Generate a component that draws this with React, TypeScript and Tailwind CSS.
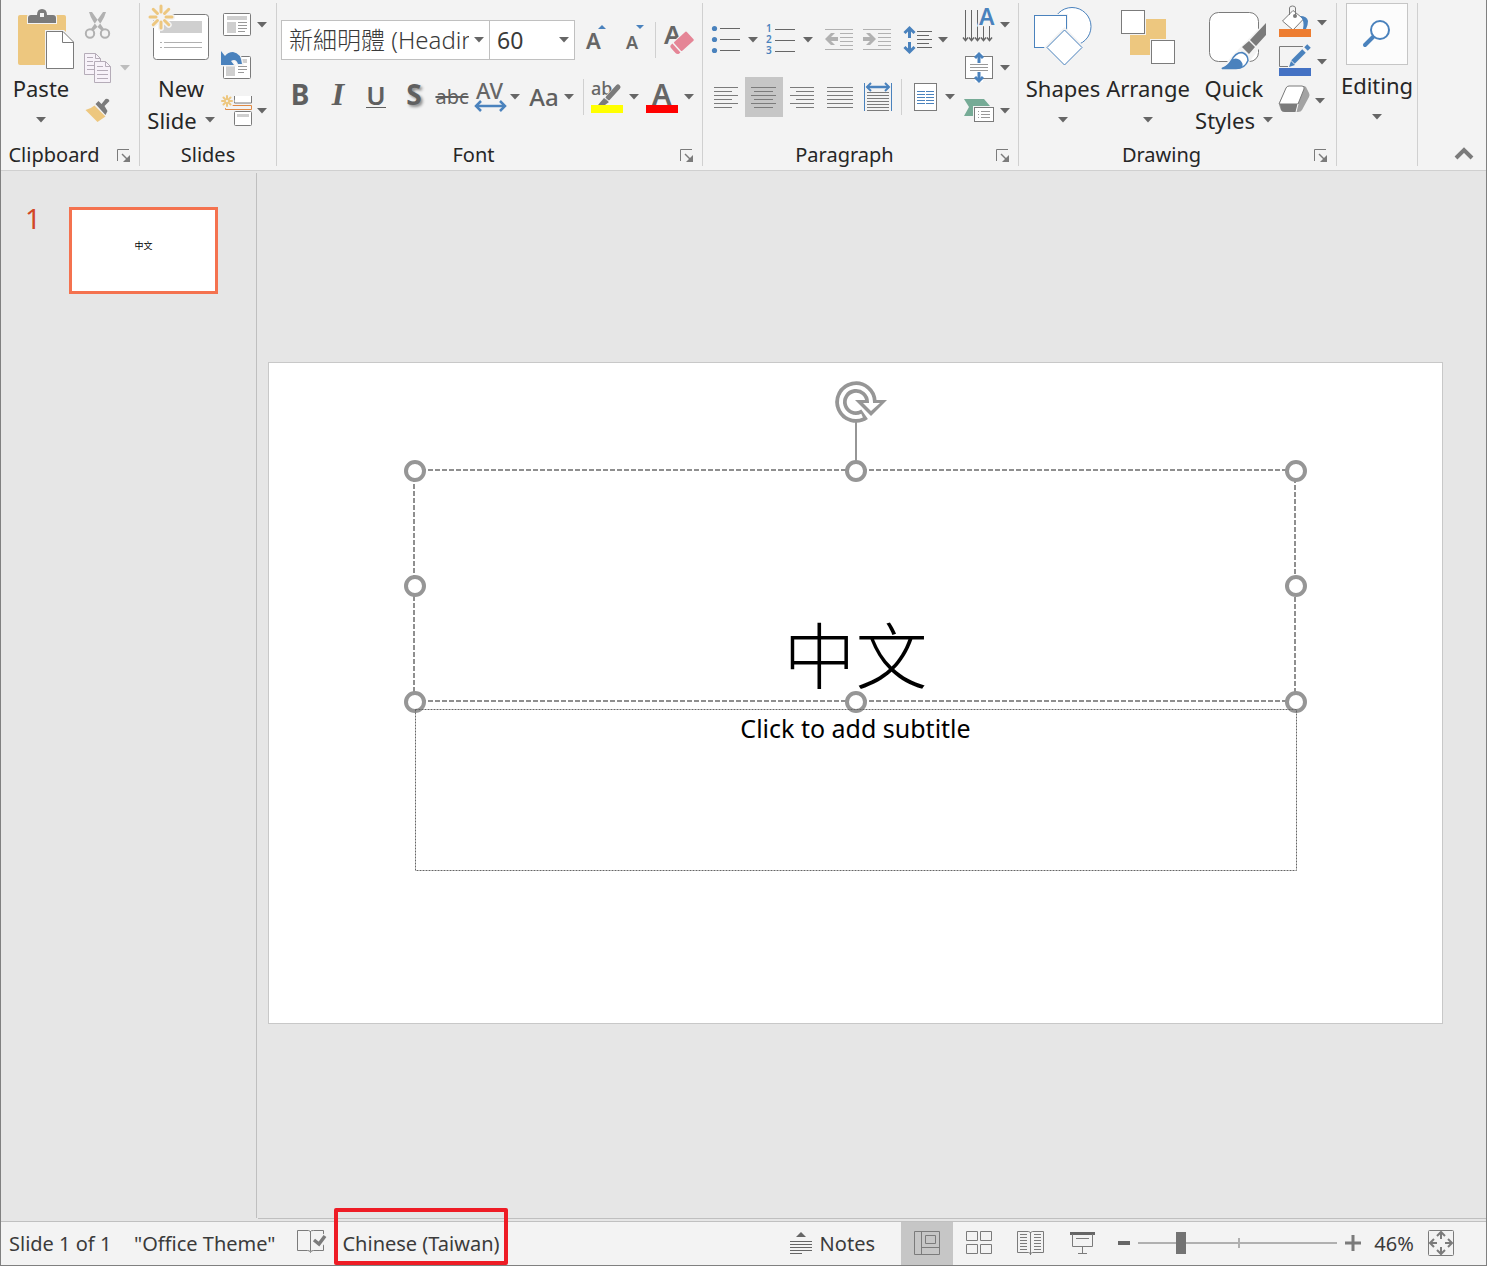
import React, { useState } from 'react';

const GOLD = '#edc77f';
const BLUE = '#4a82bd';
const GRAY = '#7b7b7b';
const DARK = '#666666';
const PAPER = '#f3f3f3';

type Kids = { children?: React.ReactNode };

function Glyph({ w, h, children }: Kids & { w: number; h: number }) {
  return (
    <svg width={w} height={h} viewBox={`0 0 ${w} ${h}`} fill="none" aria-hidden="true" className="block shrink-0 overflow-visible">
      {children}
    </svg>
  );
}

function Caret({ color = DARK }: { color?: string }) {
  return (
    <svg width="10" height="6" viewBox="0 0 10 6" aria-hidden="true" className="block shrink-0">
      <path d="M0 0h10L5 5.500z" fill={color} />
    </svg>
  );
}

function HLines({ x1, x2, ys, color = GRAY }: { x1: number; x2: number; ys: number[]; color?: string }) {
  return (
    <>
      {ys.map((y) => (
        <path key={y} d={`M${x1} ${y}H${x2}`} stroke={color} />
      ))}
    </>
  );
}

function Star({ cx, cy, r, inner, width }: { cx: number; cy: number; r: number; inner: number; width: number }) {
  const rays = [0, 45, 90, 135, 180, 225, 270, 315].map((deg) => {
    const a = (deg * Math.PI) / 180;
    return `M${cx + inner * Math.cos(a)} ${cy + inner * Math.sin(a)}L${cx + r * Math.cos(a)} ${cy + r * Math.sin(a)}`;
  });
  return (
    <>
      <path d={rays.join('')} stroke={PAPER} strokeWidth={width + 3} strokeLinecap="round" />
      <circle cx={cx} cy={cy} r={inner} fill={PAPER} />
      <path d={rays.join('')} stroke={GOLD} strokeWidth={width} strokeLinecap="round" />
    </>
  );
}

function Separator() {
  return <div className="h-9 w-px shrink-0 bg-[#d0d0d0]" />;
}

function Group({ label, launcher, children }: Kids & { label?: string; launcher?: boolean }) {
  return (
    <section aria-label={label || 'Editing'} className="flex shrink-0 flex-col border-r border-[#d0d0d0]">
      <div className="flex h-[140px]">{children}</div>
      <div className="flex h-[23px]">
        {label && <h2 className="flex-1 text-center text-[20px] leading-[23px]">{label}</h2>}
        {launcher && (
          <button aria-label={`${label} settings`} className="flex w-8 items-center justify-center">
            <Glyph w={14} h={14}>
              <path d="M1.500 13V1.500H13" stroke={GRAY} />
              <path d="M6 6l6 6" stroke={GRAY} strokeWidth="1.400" />
              <path d="M14 7v7H7z" fill={GRAY} />
            </Glyph>
          </button>
        )}
      </div>
    </section>
  );
}

// Tall button: picture on top, one or two lines of text below it
function BigButton({ icon, lines, className }: { icon: React.ReactNode; lines: string[]; className: string }) {
  return (
    <button className={`flex flex-col items-center text-[22px] leading-8 whitespace-nowrap ${className}`}>
      {icon}
      <span>{lines[0]}</span>
      <span className="flex h-8 items-center gap-2">
        {lines[1]}
        <Caret />
      </span>
    </button>
  );
}

function Tool({ label, caret, active, disabled, gap, children }: Kids & { label: string; caret?: boolean; active?: boolean; disabled?: boolean; gap?: boolean }) {
  return (
    <div className={`flex items-center ${gap ? 'gap-0.5' : ''}`}>
      <button aria-label={label} className={`flex h-10 w-[38px] shrink-0 items-center justify-center text-[#5f5f5f] ${active ? 'bg-[#c6c6c6]' : ''}`}>
        {children}
      </button>
      {caret && (
        <button aria-label={`${label} options`} className="flex h-10 w-3 items-center justify-center">
          <Caret color={disabled ? '#bdbdbd' : DARK} />
        </button>
      )}
    </div>
  );
}

function ClipboardGroup() {
  return (
    <Group label="Clipboard" launcher>
      <BigButton
        className="ml-0.5 w-[76px]"
        lines={['Paste', '']}
        icon={
          <Glyph w={66} h={69}>
            <rect x="10" y="12" width="48" height="50" rx="2" fill={GOLD} />
            <path d="M19 21v-7q0-3 3-3h6q1-6 6-6t6 6h6q3 0 3 3v7z" fill={PAPER} />
            <path d="M20 20v-5q0-3 3-3h6q0-6 5-6t5 6h6q3 0 3 3v5z" fill={GRAY} />
            <rect x="32" y="10" width="4" height="4" fill={PAPER} />
            <path d="M37 27h19l10 10v31H37z" fill={PAPER} />
            <path d="M38.500 28.500h16.500l10.500 10.500v26.500h-27z" fill="#fff" stroke={GRAY} />
            <path d="M54.500 28.500v11h11" stroke={GRAY} />
          </Glyph>
        }
      />
      <div className="flex w-[60px] flex-col">
        <div className="flex h-[43px] items-center">
          <Tool label="Cut">
            <Glyph w={38} h={43}>
              <path d="M10 9l3 0 12 17-2 2q-10-8-13-19zM27 9l-3 0-12 17 2 2q10-8 13-19z" fill="#b1b1b1" />
              <circle cx="11" cy="30.500" r="4.200" stroke="#b1b1b1" strokeWidth="2" />
              <circle cx="26" cy="30.500" r="4.200" stroke="#b1b1b1" strokeWidth="2" />
            </Glyph>
          </Tool>
        </div>
        <div className="flex h-[43px] items-center">
          <Tool label="Copy" caret disabled gap>
            <Glyph w={38} h={43}>
              <path d="M5.500 7.500h11l5 5v16h-16z" fill="#f7f2f9" stroke="#b5acb8" />
              <path d="M16.500 7.500v5h5" stroke="#b5acb8" />
              <HLines x1={8} x2={14} ys={[11.5, 15.5]} color="#b5acb8" />
              <HLines x1={8} x2={15} ys={[19.5, 23.5]} color="#b5acb8" />
              <path d="M15.500 15.500h11l5 5v16h-16z" fill="#f7f2f9" stroke="#b5acb8" />
              <path d="M26.500 15.500v5h5" stroke="#b5acb8" />
              <HLines x1={18} x2={24} ys={[20.5]} color="#b5acb8" />
              <HLines x1={18} x2={29} ys={[24.5, 28.5, 32.5]} color="#b5acb8" />
            </Glyph>
          </Tool>
        </div>
        <div className="flex h-[43px] items-center">
          <Tool label="Format Painter">
            <Glyph w={38} h={43}>
              <path d="M6.500 21q5-1 9-4.500l11 11-8 5.500z" fill={GOLD} />
              <path d="M16.500 15l3-3 3 3 4-5q3-1 4 2l-5 5 3 5-2 4z" fill={GRAY} />
            </Glyph>
          </Tool>
        </div>
      </div>
    </Group>
  );
}

function SlidesGroup() {
  return (
    <Group label="Slides">
      <BigButton
        className="ml-1 w-[74px]"
        lines={['New', 'Slide']}
        icon={
          <Glyph w={66} h={69}>
            <rect x="5.500" y="11.500" width="55" height="45" rx="3" fill="#fff" stroke={GRAY} />
            <rect x="12" y="18" width="42" height="12" fill="#cfcfcf" />
            <HLines x1={12} x2={14} ys={[39.5, 44.5]} color="#b0b0b0" />
            <HLines x1={16} x2={54} ys={[39.5, 44.5]} color="#b0b0b0" />
            <Star cx={13} cy={14} r={11} inner={5} width={3} />
          </Glyph>
        }
      />
      <div className="flex w-[58px] flex-col">
        <div className="flex h-[43px] items-center">
          <Tool label="Layout" caret>
            <Glyph w={38} h={43}>
              <rect x="5.500" y="10.500" width="27" height="22" rx="1" fill="#fff" stroke={GRAY} />
              <rect x="9" y="13" width="20" height="4" fill="#cfcfcf" />
              <rect x="9" y="19" width="9" height="11" fill="#cfcfcf" />
              <HLines x1={20} x2={29} ys={[19.5, 22.5, 25.5]} color="#999" />
              <HLines x1={20} x2={27} ys={[28.5]} color="#999" />
            </Glyph>
          </Tool>
        </div>
        <div className="flex h-[43px] items-center">
          <Tool label="Reset">
            <Glyph w={38} h={43}>
              <rect x="5.500" y="10.500" width="27" height="22" rx="1" fill="#fff" stroke={GRAY} />
              <rect x="19" y="13" width="10" height="4" fill="#cfcfcf" />
              <rect x="8" y="20" width="9" height="10" fill="#cfcfcf" />
              <HLines x1={20} x2={29} ys={[20.5, 23.5]} color="#999" />
              <HLines x1={20} x2={26} ys={[26.5]} color="#999" />
              <path d="M3 5v14h13l-3-4q5-3 7 3h4q-1-11-9-12-5 0-8 4z" fill={BLUE} stroke={PAPER} strokeWidth="3" paintOrder="stroke" />
            </Glyph>
          </Tool>
        </div>
        <div className="flex h-[43px] items-center">
          <Tool label="Section" caret>
            <Glyph w={38} h={43}>
              <path d="M16.500 7v7h17V7" fill="#fff" stroke={GRAY} />
              <path d="M13 16.500h20.500v4H7.500v-2" stroke="#e08a45" />
              <rect x="16.500" y="22.500" width="17" height="14" rx="1" fill="#fff" stroke={GRAY} />
              <rect x="19" y="25" width="12" height="3" fill="#cfcfcf" />
              <Star cx={9} cy={12} r={5} inner={2} width={2} />
            </Glyph>
          </Tool>
        </div>
      </div>
    </Group>
  );
}

function Combo({ label, value, className }: { label: string; value: string; className: string }) {
  return (
    <div className={`relative h-10 border border-[#c0c0c0] bg-white text-[#3a3a3a] ${className}`}>
      <select aria-label={label} className="h-full w-full appearance-none overflow-hidden bg-transparent pr-5 pl-[7px] outline-none">
        <option>{value}</option>
      </select>
      <span className="pointer-events-none absolute inset-y-0 right-[5px] flex items-center">
        <Caret />
      </span>
    </div>
  );
}

function FontGroup() {
  return (
    <Group label="Font" launcher>
      <div className="flex w-[425px] flex-col gap-[17px] pt-[17px] pl-1">
        <div className="flex items-center">
          <Combo label="Font" value="新細明體 (Headings)" className="w-[209px] text-[24px] font-light" />
          <Combo label="Font Size" value="60" className="w-[85px] border-l-0 text-[23px]" />
          <Tool label="Increase Font Size">
            <Glyph w={38} h={40}>
              <text x="11" y="29" fontSize="22" fontWeight="600" fill={DARK}>A</text>
              <path d="M23 9l4-4 4 4z" fill={BLUE} />
            </Glyph>
          </Tool>
          <Tool label="Decrease Font Size">
            <Glyph w={38} h={40}>
              <text x="13" y="29" fontSize="18" fontWeight="600" fill={DARK}>A</text>
              <path d="M23 5h8l-4 4z" fill={BLUE} />
            </Glyph>
          </Tool>
          <div className="ml-1">
            <Separator />
          </div>
          <Tool label="Clear Formatting">
            <Glyph w={38} h={40}>
              <text x="8" y="24" fontSize="26" fontWeight="600" fill={DARK}>A</text>
              <g transform="rotate(-42 26 23)">
                <rect x="13" y="16" width="25" height="14" fill={PAPER} />
                <rect x="20" y="17" width="17" height="12" rx="1" fill="#e58596" />
                <path d="M18.500 17v12h-2q-2-1-2-3v-6q0-3 2-3z" fill="#e58596" />
              </g>
            </Glyph>
          </Tool>
        </div>
        <div className="flex items-center">
          <Tool label="Bold"><span className="pb-1.5 text-[28px] leading-9 font-bold">B</span></Tool>
          <Tool label="Italic"><span className="pb-1.5 font-['Liberation_Serif',serif] text-[32px] leading-9 font-bold italic">I</span></Tool>
          <Tool label="Underline"><span className="mb-1 border-b border-[#5f5f5f] text-[26px] leading-6 font-semibold">U</span></Tool>
          <Tool label="Text Shadow"><span className="pb-1.5 text-[28px] leading-9 font-bold [text-shadow:2px_2px_3px_#8a8a8a]">S</span></Tool>
          <Tool label="Strikethrough"><span className="text-[20px] leading-9 line-through">abc</span></Tool>
          <Tool label="Character Spacing" caret>
            <Glyph w={38} h={40}>
              <text x="5" y="22" fontSize="22" fontWeight="500" fill={DARK}>AV</text>
              <path d="M6 29h27" stroke={BLUE} strokeWidth="2.500" />
              <path d="M10 24l-5 5 5 5M29 24l5 5-5 5" stroke={BLUE} strokeWidth="2.500" />
            </Glyph>
          </Tool>
          <div className="ml-1">
            <Tool label="Change Case" caret><span className="text-[24px] leading-9 font-medium">Aa</span></Tool>
          </div>
          <div className="mx-1 pl-1">
            <Separator />
          </div>
          <Tool label="Text Highlight Color" caret gap>
            <Glyph w={38} h={40}>
              <text x="3" y="18" fontSize="18" fontWeight="500" fill={DARK}>ab</text>
              <path d="M32 9L15 27" stroke={PAPER} strokeWidth="7" />
              <path d="M30 10l-10 11" stroke={GRAY} strokeWidth="5" strokeLinecap="round" />
              <path d="M16 21l5 4-4 3h-7z" fill={GRAY} />
              <path d="M16 20l6 5" stroke={PAPER} />
              <rect x="3" y="28" width="32" height="8" fill="#ffff00" />
            </Glyph>
          </Tool>
          <div className="ml-[3px]">
            <Tool label="Font Color" caret gap>
              <Glyph w={38} h={40}>
                <text x="9" y="28" fontSize="29" fontWeight="600" fill={DARK}>A</text>
                <rect x="3" y="28" width="32" height="8" fill="#ff0000" />
              </Glyph>
            </Tool>
          </div>
        </div>
      </div>
    </Group>
  );
}

const ALIGN_ROWS = [10.5, 14.5, 18.5, 22.5, 26.5, 30.5];

function AlignLines({ long, short }: { long: number[]; short: number[] }) {
  return (
    <Glyph w={38} h={40}>
      {ALIGN_ROWS.map((y, i) => {
        const [a, b] = i % 2 ? short : long;
        return <path key={y} d={`M${a} ${y}H${b}`} stroke={GRAY} />;
      })}
    </Glyph>
  );
}

function ParagraphGroup() {
  return (
    <Group label="Paragraph" launcher>
      <div className="flex w-[258px] flex-col gap-[17px] pt-[17px] pl-1">
        <div className="flex items-center gap-[3px]">
          <Tool label="Bullets" caret gap>
            <Glyph w={38} h={40}>
              {[8.5, 19.5, 30.5].map((y) => <circle key={y} cx="7.500" cy={y} r="2.600" fill={BLUE} />)}
              <HLines x1={13} x2={33} ys={[8.5, 19.5, 30.5]} color={DARK} />
            </Glyph>
          </Tool>
          <Tool label="Numbering" caret gap>
            <Glyph w={38} h={40}>
              {[1, 2, 3].map((n) => <text key={n} x="4" y={n * 11 + 1} fontSize="10" fontWeight="600" fill={BLUE}>{n}</text>)}
              <HLines x1={13} x2={33} ys={[9.5, 20.5, 31.5]} color={DARK} />
            </Glyph>
          </Tool>
          <div className="ml-[3px] flex">
            <Tool label="Decrease List Level">
              <Glyph w={38} h={40}>
                <HLines x1={5} x2={33} ys={[9.5, 29.5]} color="#b1b1b1" />
                <HLines x1={20} x2={33} ys={[13.5, 17.5, 21.5, 25.5]} color="#b1b1b1" />
                <path d="M5 19l6-6h4l-4 4h7v4h-7l4 4h-4z" fill="#b1b1b1" />
              </Glyph>
            </Tool>
            <Tool label="Increase List Level">
              <Glyph w={38} h={40}>
                <HLines x1={5} x2={33} ys={[9.5, 29.5]} color="#b1b1b1" />
                <HLines x1={20} x2={33} ys={[13.5, 17.5, 21.5, 25.5]} color="#b1b1b1" />
                <path d="M18 19l-6-6H8l4 4H5v4h7l-4 4h4z" fill="#b1b1b1" />
              </Glyph>
            </Tool>
          </div>
          <Tool label="Line Spacing" caret>
            <Glyph w={38} h={40}>
              <path d="M10.500 8v10M10.500 22v10" stroke={BLUE} strokeWidth="3" />
              <path d="M5.500 13l5-5 5 5M5.500 27l5 5 5-5" stroke={BLUE} strokeWidth="3" />
              <HLines x1={18} x2={33} ys={[11.5, 19.5, 27.5]} color={DARK} />
              <HLines x1={18} x2={30} ys={[15.5, 23.5]} color={DARK} />
            </Glyph>
          </Tool>
        </div>
        <div className="flex items-center">
          <Tool label="Align Left"><AlignLines long={[7, 31]} short={[7, 25]} /></Tool>
          <Tool label="Center" active><AlignLines long={[6, 31]} short={[9, 28]} /></Tool>
          <Tool label="Align Right"><AlignLines long={[7, 31]} short={[13, 31]} /></Tool>
          <Tool label="Justify"><AlignLines long={[6, 32]} short={[6, 32]} /></Tool>
          <Tool label="Distributed">
            <Glyph w={38} h={40}>
              <path d="M5.500 6v28M32.500 6v28" stroke={BLUE} />
              <path d="M8 10h22" stroke={BLUE} strokeWidth="2.500" />
              <path d="M12 6l-4 4 4 4M26 6l4 4-4 4" stroke={BLUE} strokeWidth="2" />
              <HLines x1={8} x2={30} ys={[15.5, 18.5, 21.5, 24.5, 27.5, 30.5, 33.5]} />
            </Glyph>
          </Tool>
          <div className="mx-1">
            <Separator />
          </div>
          <Tool label="Columns" caret>
            <Glyph w={38} h={40}>
              <rect x="8.500" y="6.500" width="22" height="27" fill="#fff" stroke={GRAY} />
              <HLines x1={11} x2={19} ys={[14.5, 17.5, 20.5, 23.5, 26.5]} color={BLUE} />
              <HLines x1={20} x2={28} ys={[14.5, 17.5, 20.5, 23.5, 26.5]} color={BLUE} />
            </Glyph>
          </Tool>
        </div>
      </div>
      <div className="flex w-[57px] flex-col">
        <div className="flex h-[43px] items-center">
          <Tool label="Text Direction" caret>
            <Glyph w={38} h={43}>
              <path d="M4.500 7v29M10.500 7v29M16.500 7v29M22.500 23v13M28.500 23v13" stroke={DARK} />
              {[4.5, 10.5, 16.5, 22.5, 28.5].map((x) => <path key={x} d={`M${x - 2.5} 34.500l2.500 3 2.500-3`} stroke={DARK} strokeWidth="1.500" />)}
              <text x="18" y="22" fontSize="23" fontWeight="600" fill={BLUE} stroke={PAPER} strokeWidth="3" paintOrder="stroke">A</text>
            </Glyph>
          </Tool>
        </div>
        <div className="flex h-[43px] items-center">
          <Tool label="Align Text" caret>
            <Glyph w={38} h={43}>
              <rect x="4.500" y="10.500" width="27" height="22" fill="#fff" stroke={GRAY} />
              <HLines x1={9} x2={27} ys={[18.5, 21.5, 24.5]} color="#999" />
              <path d="M18 7v9M18 27v9" stroke="#fff" strokeWidth="8" />
              <path d="M18 8v9M18 26v9" stroke={BLUE} strokeWidth="3" />
              <path d="M14 12l4-4 4 4M14 31l4 4 4-4" stroke={BLUE} strokeWidth="3" />
            </Glyph>
          </Tool>
        </div>
        <div className="flex h-[43px] items-center">
          <Tool label="Convert to SmartArt" caret>
            <Glyph w={38} h={43}>
              <path d="M3 10h20l6 7-6 10H3l5-9z" fill="#76ab96" />
              <rect x="12" y="17" width="22" height="17" fill={PAPER} />
              <rect x="13.500" y="18.500" width="19" height="14" fill="#fff" stroke={GRAY} />
              <HLines x1={17} x2={18} ys={[22.5, 25.5, 28.5]} color="#999" />
              <HLines x1={20} x2={29} ys={[22.5, 25.5, 28.5]} color="#999" />
            </Glyph>
          </Tool>
        </div>
      </div>
    </Group>
  );
}

function DrawingGroup() {
  return (
    <Group label="Drawing" launcher>
      <BigButton
        className="ml-0.5 w-[84px]"
        lines={['Shapes', '']}
        icon={
          <Glyph w={60} h={69}>
            <circle cx="39" cy="23.500" r="19" fill="#fff" stroke={BLUE} />
            <rect x="0" y="11" width="35" height="35" fill={PAPER} />
            <rect x="1.500" y="12.500" width="32" height="32" fill="#fff" stroke={BLUE} />
            <path d="M31.500 24l20.500 20.500L31.500 65 11 44.500z" fill={PAPER} />
            <path d="M31.500 27L49 44.500 31.500 62 14 44.500z" fill="#fff" stroke={BLUE} />
          </Glyph>
        }
      />
      <BigButton
        className="w-[86px]"
        lines={['Arrange', '']}
        icon={
          <Glyph w={60} h={69}>
            <rect x="28" y="16" width="20" height="20" fill={GOLD} />
            <rect x="12" y="32" width="20" height="20" fill={GOLD} />
            <path d="M2 6h26v26H2zM32 36h26v26H32z" fill={PAPER} />
            <rect x="3.500" y="7.500" width="23" height="23" fill="#fff" stroke={GRAY} />
            <rect x="33.500" y="37.500" width="23" height="23" fill="#fff" stroke={GRAY} />
          </Glyph>
        }
      />
      <BigButton
        className="w-[86px]"
        lines={['Quick', 'Styles']}
        icon={
          <Glyph w={74} h={69}>
            <rect x="12.500" y="9.500" width="49" height="49" rx="9" fill="#fff" stroke={GRAY} />
            <path d="M70 17v18L50 62l-28 6 16-18z" fill={PAPER} />
            <path d="M69 20v12l-10 11-6-6zM52 38l6 6-6 7-7-7z" fill={GRAY} />
            <path d="M25 65.500q6-2 9-7 4-9 11-9 6 2 6 8-3 8-12 8z" fill="#fff" stroke={BLUE} strokeWidth="1.500" />
            <path d="M24 66q7-3 10-9 5-3 9 0 4 4 2 7-2 2-6 2z" fill={BLUE} />
          </Glyph>
        }
      />
      <div className="-ml-px flex w-[60px] flex-col">
        <div className="flex h-[39px] items-center">
          <Tool label="Shape Fill" caret gap>
            <Glyph w={38} h={39}>
              <path d="M6.500 18L17 7.500 27.500 16 17 27z" fill="#fff" stroke={GRAY} />
              <path d="M13.500 12V5q0-2 3-2t3 2v8" stroke={GRAY} />
              <circle cx="19" cy="13" r="2" fill={GRAY} />
              <path d="M24 13q7 0 8 5 0 4-2 8h-3q2-8-3-13z" fill={BLUE} />
              <rect x="3" y="26" width="32" height="8" fill="#ed7d31" />
            </Glyph>
          </Tool>
        </div>
        <div className="flex h-[39px] items-center">
          <Tool label="Shape Outline" caret gap>
            <Glyph w={38} h={39}>
              <path d="M27 4.500H3.500v20H12" stroke={GRAY} />
              <path d="M32 5L16 22" stroke={PAPER} strokeWidth="8" />
              <path d="M28 9L17 20" stroke={BLUE} strokeWidth="5" />
              <path d="M30 7l3-3" stroke={BLUE} strokeWidth="5" />
              <path d="M15 19l4 4-6 2z" fill={BLUE} />
              <rect x="3" y="26" width="32" height="8" fill="#4472c4" />
            </Glyph>
          </Tool>
        </div>
        <div className="flex h-[39px] items-center">
          <Tool label="Shape Effects" caret>
            <Glyph w={38} h={39}>
              <path d="M11 6q1-1 3-1h13q2 0 3 1l3 6q1 2 0 4l-7 13q-1 2-4 2H9q-3 0-4-2l-2-5q0-2 1-4z" fill="#a3a3a3" />
              <path d="M10 7q1-2 3-2h13q3 0 2 3l-6 15H3z" fill="#fff" stroke={GRAY} />
              <path d="M4 23h18l-2 8H9q-3 0-4-2z" fill={GRAY} />
              <path d="M22 23l-2 8" stroke="#fff" />
            </Glyph>
          </Tool>
        </div>
      </div>
    </Group>
  );
}

function EditingGroup() {
  return (
    <Group>
      <button className="flex w-[80px] flex-col items-center text-[22px] leading-8">
        <span className="mb-1 border border-[#c6c6c6] bg-[#fcfcfc]">
          <Glyph w={60} h={60}>
            <path d="M27 32L18 41" stroke={BLUE} strokeWidth="4" strokeLinecap="round" />
            <circle cx="33" cy="26" r="9" fill="#fff" stroke={BLUE} strokeWidth="2" />
          </Glyph>
        </span>
        <span>Editing</span>
        <span className="flex h-8 items-center">
          <Caret />
        </span>
      </button>
    </Group>
  );
}

function Ribbon() {
  return (
    <header className="flex shrink-0 border-b border-[#d0d0d0] bg-[#f3f3f3] pt-[3px] pb-1">
      <ClipboardGroup />
      <SlidesGroup />
      <FontGroup />
      <ParagraphGroup />
      <DrawingGroup />
      <EditingGroup />
      <button aria-label="Collapse the Ribbon" className="mt-auto mr-3 mb-1 ml-auto">
        <Glyph w={20} h={14}>
          <path d="M2 10l8-8 8 8" stroke={GRAY} strokeWidth="4" />
        </Glyph>
      </button>
    </header>
  );
}

const HANDLES = [
  'left-0 top-0',
  'left-1/2 top-0',
  'left-full top-0',
  'left-0 top-1/2',
  'left-full top-1/2',
  'left-0 top-full',
  'left-1/2 top-full',
  'left-full top-full',
];

function Slide() {
  return (
    <div className="flex h-[662px] flex-1 flex-col border border-[#c8c8c8] bg-white px-[146px] pt-[108px] text-black">
      <div className="relative flex h-[231px] items-end justify-center">
        <svg aria-hidden="true" className="absolute inset-0 h-full w-full overflow-visible">
          <rect x="-1" y="-1" width="100%" height="100%" fill="none" stroke="#8f8f8f" strokeWidth="2" strokeDasharray="5 2" />
        </svg>
        <h1 className="text-[72px] leading-[94px] font-light">中文</h1>
        {/* rotation handle and its stem */}
        <svg width="54" height="90" viewBox="0 0 54 90" fill="none" aria-hidden="true" className="absolute bottom-full left-1/2 -ml-[21px]">
          <path d="M21 41v49" stroke="#969696" strokeWidth="2" />
          <path d="M29.600 33.300A15 15 0 1 1 36 21" stroke="#969696" strokeWidth="11.500" />
          <path d="M20 19h32L36 35z" fill="#969696" />
          <path d="M27.100 34.700A15 15 0 1 1 36 21v3" stroke="#fff" strokeWidth="4" />
          <path d="M28 22h17l-9 8z" fill="#fff" />
        </svg>
        {HANDLES.map((pos) => (
          <span key={pos} className={`absolute size-[22px] -translate-x-1/2 -translate-y-1/2 rounded-full border-4 border-[#969696] bg-white ${pos}`} />
        ))}
      </div>
      <div className="relative mt-[7px] h-[161px]">
        <svg aria-hidden="true" className="absolute inset-0 h-full w-full overflow-visible">
          <rect x="0.500" y="0.500" width="100%" height="100%" fill="none" stroke="#666" strokeDasharray="2 1" />
        </svg>
        <p className="text-center text-[25px] leading-[38px]">Click to add subtitle</p>
      </div>
    </div>
  );
}

function Workspace() {
  return (
    <main className="flex flex-1 bg-[#e6e6e6]">
      <nav aria-label="Slides" className="mt-0.5 mb-[3px] w-64 shrink-0 border-r border-[#bfbfbf]">
        <button className="mt-[34px] ml-6 flex items-start gap-7">
          <span className="w-4 text-[28px] leading-[22px] text-[#d24726]">1</span>
          <span className="flex h-[87px] w-[149px] justify-center border-3 border-[#f4724f] bg-white pt-[30px] text-[9px] leading-3 text-black">中文</span>
        </button>
      </nav>
      <div className="mb-0.5 ml-px flex flex-1 items-center border-b border-[#bfbfbf] pr-[43px] pb-1 pl-2.5">
        <Slide />
      </div>
    </main>
  );
}

function ViewButton({ label, active, onClick, children }: Kids & { label: string; active: boolean; onClick: () => void }) {
  return (
    <button aria-label={label} aria-pressed={active} onClick={onClick} className={`flex w-[52px] items-center justify-center pb-0.5 ${active ? 'bg-[#c6c6c6]' : ''}`}>
      {children}
    </button>
  );
}

function StatusBar() {
  const [view, setView] = useState('normal');
  const [zoom, setZoom] = useState(20);

  return (
    <footer className="flex h-11 shrink-0 items-stretch border-t border-[#c0c0c0] bg-[#f3f3f3] text-[20px] text-[#3b3b3b]">
      <button className="ml-2 w-[104px] text-left">Slide 1 of 1</button>
      <button className="ml-[21px] w-[141px] text-left whitespace-nowrap">"Office Theme"</button>
      <button aria-label="Spelling" className="ml-[22px] pb-1.5">
        <Glyph w={30} h={26}>
          <path d="M0.500 2.500h11q2 1 2 1 0-1 3-1h10v20h-10q-3 0-3 2 0-2-3-2h-10zM13.500 3v20" stroke={GRAY} />
          <path d="M17 12l5 5 7-9" stroke={PAPER} strokeWidth="7" />
          <path d="M17 12l5 4 6-8" stroke={GRAY} strokeWidth="3.500" />
        </Glyph>
      </button>
      <button className="relative ml-[7px] w-[174px] whitespace-nowrap">
        Chinese (Taiwan)
        <span className="pointer-events-none absolute inset-x-0 -top-[14px] bottom-0 rounded-[2px] border-4 border-[#ee1c25]" />
      </button>

      <div className="ml-auto flex items-stretch">
        <button className="mr-[26px] flex items-center gap-2">
          <Glyph w={22} h={24}>
            <path d="M6 5l5-5 5 5z" fill={DARK} />
            <HLines x1={0} x2={22} ys={[9.5, 12.5, 15.5, 18.5]} color={DARK} />
            <HLines x1={0} x2={12} ys={[21.5]} color={DARK} />
          </Glyph>
          Notes
        </button>
        <ViewButton label="Normal" active={view === 'normal'} onClick={() => setView('normal')}>
          <Glyph w={26} h={24}>
            <path d="M0.500 0.500h25v23H0.500zM7.500 0.500v23M7.500 16.500h18M11.500 4.500h10v8h-10z" stroke={GRAY} />
          </Glyph>
        </ViewButton>
        <ViewButton label="Slide Sorter" active={view === 'sorter'} onClick={() => setView('sorter')}>
          <Glyph w={26} h={24}>
            <path d="M0.500 0.500h11v9h-11zM14.500 0.500h11v9h-11zM0.500 13.500h11v9h-11zM14.500 13.500h11v9h-11z" stroke={GRAY} />
          </Glyph>
        </ViewButton>
        <ViewButton label="Reading View" active={view === 'reading'} onClick={() => setView('reading')}>
          <Glyph w={28} h={24}>
            <path d="M0.500 0.500h11l2 1 2-1h11v21h-11l-2 1-2-1h-11zM13.500 1v23" stroke={GRAY} />
            <HLines x1={3} x2={10} ys={[3.5, 6.5, 9.5, 12.5, 15.5, 18.5]} />
            <HLines x1={17} x2={24} ys={[3.5, 6.5, 9.5, 12.5, 15.5, 18.5]} />
          </Glyph>
        </ViewButton>
        <ViewButton label="Slide Show" active={view === 'show'} onClick={() => setView('show')}>
          <Glyph w={26} h={24}>
            <path d="M0 2.500h25" stroke={DARK} strokeWidth="3" />
            <path d="M2.500 3v12.500h20V3M6 7.500h13M12.500 15v7M8 22.500h9" stroke={GRAY} />
          </Glyph>
        </ViewButton>
        <button aria-label="Zoom Out" onClick={() => setZoom(Math.max(0, zoom - 5))} className="ml-[9px] flex items-center">
          <Glyph w={12} h={16}>
            <path d="M0 7h12" stroke={DARK} strokeWidth="4" />
          </Glyph>
        </button>
        <div className="relative mx-2 flex w-[199px] items-center pb-0.5">
          <span className="absolute left-1/2 h-2.5 w-0.5 bg-[#b0b0b0]" />
          <input
            type="range"
            aria-label="Zoom"
            min={0}
            max={100}
            value={zoom}
            onChange={(e) => setZoom(Number(e.target.value))}
            className="relative h-6 w-full appearance-none bg-transparent [&::-webkit-slider-runnable-track]:h-0.5 [&::-webkit-slider-runnable-track]:bg-[#b0b0b0] [&::-webkit-slider-thumb]:-mt-2.5 [&::-webkit-slider-thumb]:h-[22px] [&::-webkit-slider-thumb]:w-2.5 [&::-webkit-slider-thumb]:appearance-none [&::-webkit-slider-thumb]:bg-[#737373]"
          />
        </div>
        <button aria-label="Zoom In" onClick={() => setZoom(Math.min(100, zoom + 5))} className="flex items-center pb-0.5">
          <Glyph w={16} h={16}>
            <path d="M0 8h16M8 0v16" stroke={GRAY} strokeWidth="3" />
          </Glyph>
        </button>
        <button className="ml-3 w-[42px]">46%</button>
        <button aria-label="Fit slide to current window" className="mr-8 ml-[13px] flex items-center pb-0.5">
          <Glyph w={26} h={26}>
            <rect x="0.500" y="0.500" width="25" height="25" rx="1" stroke={GRAY} />
            <path d="M13 2v7M13 17v7M2 13h7M17 13h7" stroke={GRAY} strokeWidth="2" />
            <path d="M9 6l4-4 4 4M9 20l4 4 4-4M6 9l-4 4 4 4M20 9l4 4-4 4" stroke={GRAY} strokeWidth="2" />
          </Glyph>
        </button>
      </div>
    </footer>
  );
}

export default function App() {
  return (
    <div className="flex min-h-screen flex-col bg-white pb-px font-['Noto_Sans','Noto_Sans_CJK_TC',sans-serif] text-[#262626]">
      <div className="flex flex-1 flex-col border-x border-b border-[#808080]">
        <Ribbon />
        <Workspace />
        <StatusBar />
      </div>
    </div>
  );
}
